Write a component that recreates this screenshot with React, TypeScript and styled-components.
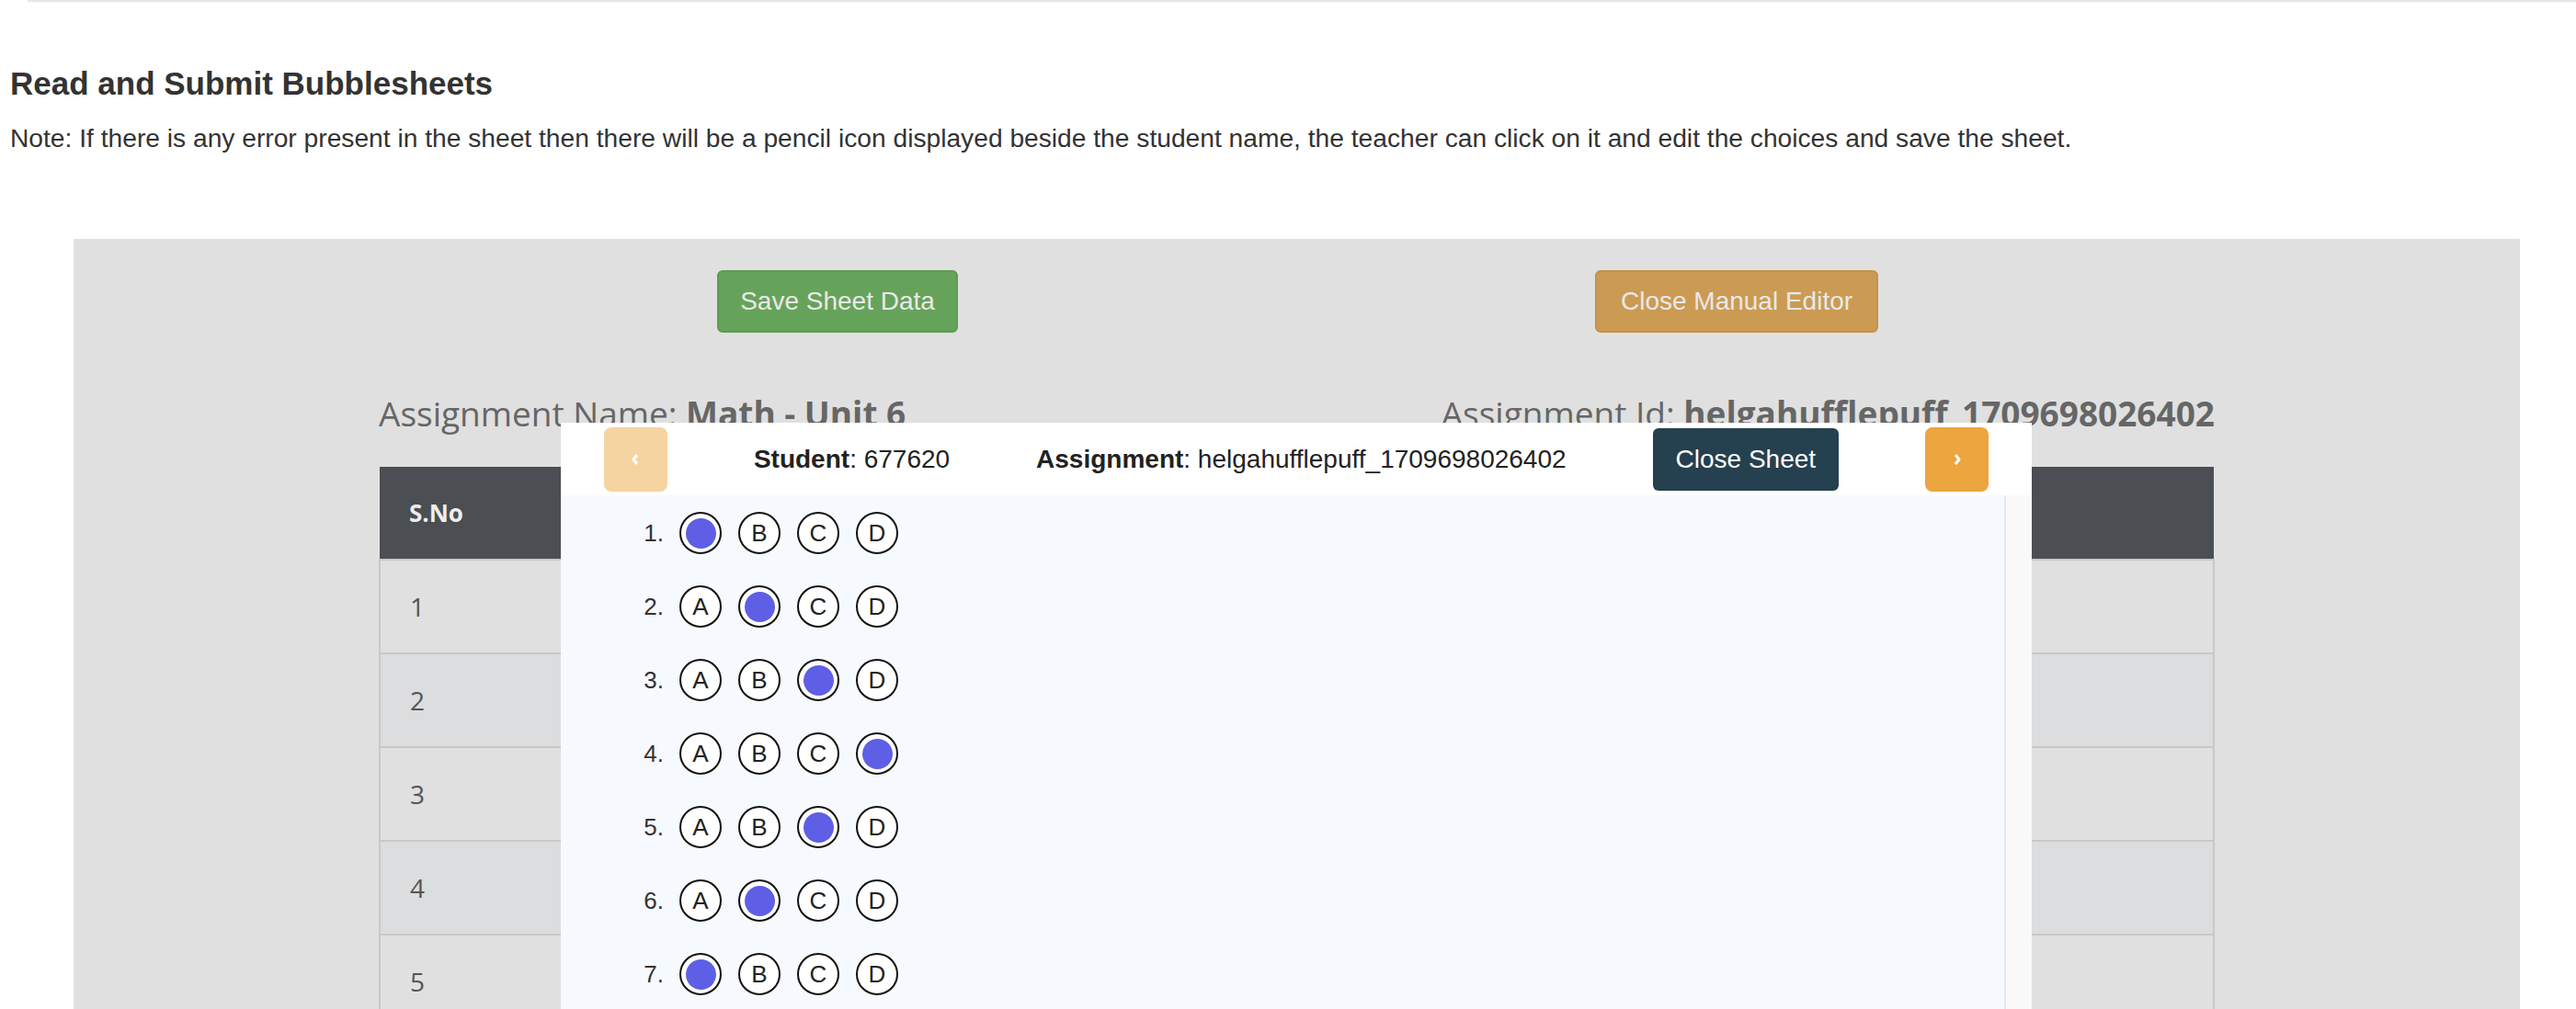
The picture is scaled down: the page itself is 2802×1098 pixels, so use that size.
import React from 'react'
import styled, { createGlobalStyle } from 'styled-components'

const GlobalStyle = createGlobalStyle`
  html, body {
    margin: 0;
    padding: 0;
    background: #fff;
    font-family: 'Liberation Sans', Arial, sans-serif;
    color: #333;
  }
  * { box-sizing: border-box; }
`

const Page = styled.div`
  width: 2802px;
  min-height: 1098px;
  overflow: hidden;
`

const TopRule = styled.div`
  height: 2px;
  margin-left: 30px;
  background: #e6e6e6;
`

const Intro = styled.div`
  padding: 69px 0 0 11px;
`

const Title = styled.h4`
  margin: 0;
  font-size: 35px;
  line-height: 40px;
  font-weight: bold;
  color: #333;
`

const Note = styled.p`
  margin: 21px 0 0;
  font-size: 28.2px;
  line-height: 36px;
  color: #333;
`

const Panel = styled.section`
  position: relative;
  margin: 92px 0 0 80px;
  width: 2661px;
  height: 900px;
  background: #e0e0e0;
  padding-top: 34px;
`

const Inner = styled.div`
  width: 1997px;
  margin: 0 auto;
`

const ButtonRow = styled.div`
  display: grid;
  grid-template-columns: 998px 958px;
  justify-items: center;
`

const ActionButton = styled.button<{ $tone: 'green' | 'gold' }>`
  height: 68px;
  padding: 0 ${(p) => (p.$tone === 'green' ? '23px' : '26px')};
  border-radius: 6px;
  font-family: 'Liberation Sans', Arial, sans-serif;
  font-size: 28px;
  color: #e9e9e9;
  background: ${(p) => (p.$tone === 'green' ? '#66a35a' : '#cb9b53')};
  border: 2px solid ${(p) => (p.$tone === 'green' ? '#5e9a52' : '#c6924a')};
`

const InfoRow = styled.div`
  display: flex;
  justify-content: space-between;
  margin-top: 64px;
  font-family: 'Open Sans', sans-serif;
  font-size: 37px;
  line-height: 48px;
  color: #666;

  b {
    font-weight: 700;
  }
`

const Table = styled.table`
  width: 100%;
  margin-top: 34px;
  border-collapse: collapse;
  font-family: 'Open Sans', sans-serif;
`

const Th = styled.th<{ $narrow?: boolean }>`
  width: ${(p) => (p.$narrow ? '20%' : 'auto')};
  height: 101px;
  padding: 0 32px;
  text-align: left;
  background: #4b4e52;
  color: #eee;
  font-size: 26px;
  font-weight: 700;
`

const Tr = styled.tr`
  &:nth-child(even) td {
    background: #dcdddf;
  }
`

const Td = styled.td`
  height: 102px;
  padding: 0 32px;
  background: #e0e0e0;
  border: 2px solid #c8c8c8;
  border-bottom: none;
  font-size: 28px;
  color: #555;
`

const Modal = styled.div`
  position: absolute;
  left: 530px;
  top: 200px;
  width: 1600px;
  height: 760px;
  background: #fff;
  display: flex;
  flex-direction: column;
  overflow: hidden;
`

const ModalHeader = styled.div`
  flex: 0 0 79px;
  display: flex;
  align-items: center;
  justify-content: space-around;
  font-size: 28px;
  color: #222;
`

const NavButton = styled.button<{ $disabled?: boolean }>`
  width: 69px;
  height: 70px;
  border: none;
  border-radius: 8px;
  background: ${(p) => (p.$disabled ? '#f6d4a1' : '#eca53f')};
  display: flex;
  align-items: center;
  justify-content: center;
  padding: 0;
`

const CloseSheet = styled.button`
  height: 68px;
  padding: 0 25px;
  border: none;
  border-radius: 6px;
  background: #25404f;
  color: #fff;
  font-family: 'Liberation Sans', Arial, sans-serif;
  font-size: 28px;
`

const ModalBody = styled.div`
  flex: 1;
  min-height: 0;
  display: flex;
  background: #f6f9fd;
`

const Questions = styled.div`
  flex: 1;
  padding: 18px 0 0 72px;
  display: flex;
  flex-direction: column;
  gap: 34px;
`

const ScrollTrack = styled.div`
  width: 30px;
  background: #f9f9f9;
  border-left: 2px solid #e6e6e6;
`

const QuestionRow = styled.div`
  display: flex;
  align-items: center;
  gap: 17px;
`

const QNum = styled.span`
  width: 40px;
  text-align: right;
  font-size: 26px;
  color: #333;
`

const Bubbles = styled.div`
  display: flex;
  gap: 18px;
`

const Bubble = styled.span<{ $filled?: boolean }>`
  width: 46px;
  height: 46px;
  border: 2px solid #111;
  border-radius: 50%;
  display: flex;
  align-items: center;
  justify-content: center;
  font-size: 26px;
  color: #222;
  background: #fff;

  &::after {
    content: '';
    display: ${(p) => (p.$filled ? 'block' : 'none')};
    width: 33px;
    height: 33px;
    border-radius: 50%;
    background: #5e5fe5;
  }
`

const Chevron = ({ dir }: { dir: 'left' | 'right' }) => (
  <svg width="12" height="18" viewBox="0 0 12 18">
    <polyline
      points={dir === 'left' ? '8,4 4,9 8,14' : '4,4 8,9 4,14'}
      fill="none"
      stroke="#fff"
      strokeWidth="3"
      strokeLinejoin="round"
    />
  </svg>
)

const answers = ['A', 'B', 'C', 'D', 'C', 'B', 'A', 'D', 'B', 'C']
const choices = ['A', 'B', 'C', 'D']

export default function App() {
  return (
    <Page>
      <GlobalStyle />
      <TopRule />
      <Intro>
        <Title>Read and Submit Bubblesheets</Title>
        <Note>
          Note: If there is any error present in the sheet then there will be a pencil icon displayed beside the
          student name, the teacher can click on it and edit the choices and save the sheet.
        </Note>
      </Intro>

      <Panel>
        <Inner>
          <ButtonRow>
            <ActionButton $tone="green">Save Sheet Data</ActionButton>
            <ActionButton $tone="gold">Close Manual Editor</ActionButton>
          </ButtonRow>

          <InfoRow>
            <span>
              Assignment Name: <b>Math - Unit 6</b>
            </span>
            <span>
              Assignment Id: <b>helgahufflepuff_1709698026402</b>
            </span>
          </InfoRow>

          {/* the other columns sit under the sheet modal */}
          <Table>
            <thead>
              <tr>
                <Th $narrow>S.No</Th>
                <Th />
                <Th />
              </tr>
            </thead>
            <tbody>
              {[1, 2, 3, 4, 5, 6].map((n) => (
                <Tr key={n}>
                  <Td>{n}</Td>
                  <Td />
                  <Td />
                </Tr>
              ))}
            </tbody>
          </Table>
        </Inner>

        <Modal>
          <ModalHeader>
            <NavButton $disabled>
              <Chevron dir="left" />
            </NavButton>
            <span>
              <b>Student</b>: 677620
            </span>
            <span>
              <b>Assignment</b>: helgahufflepuff_1709698026402
            </span>
            <CloseSheet>Close Sheet</CloseSheet>
            <NavButton>
              <Chevron dir="right" />
            </NavButton>
          </ModalHeader>
          <ModalBody>
            <Questions>
              {answers.map((ans, i) => (
                <QuestionRow key={i}>
                  <QNum>{i + 1}.</QNum>
                  <Bubbles>
                    {choices.map((c) => (
                      <Bubble key={c} $filled={c === ans}>
                        {c === ans ? null : c}
                      </Bubble>
                    ))}
                  </Bubbles>
                </QuestionRow>
              ))}
            </Questions>
            <ScrollTrack />
          </ModalBody>
        </Modal>
      </Panel>
    </Page>
  )
}
